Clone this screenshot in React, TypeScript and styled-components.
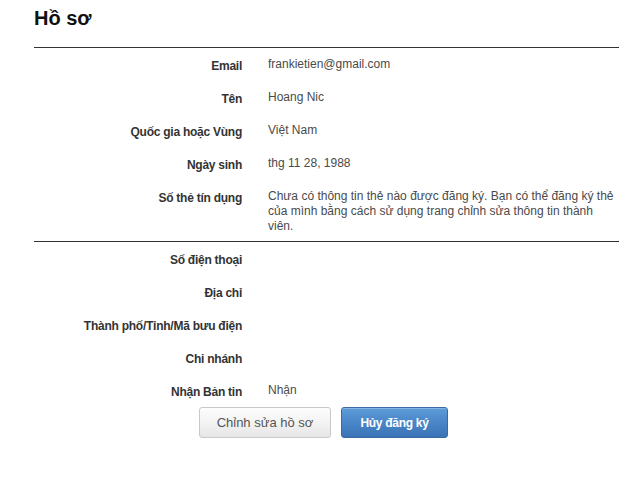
import React from "react";
import styled, { createGlobalStyle } from "styled-components";

const GlobalStyle = createGlobalStyle`
  html, body {
    margin: 0;
    padding: 0;
    background: #ffffff;
  }
  body {
    font-family: "Liberation Sans", Arial, sans-serif;
    color: #333;
  }
`;

interface Field {
  label: string;
  value?: string;
}

const accountFields: Field[] = [
  { label: "Email", value: "frankietien@gmail.com" },
  { label: "Tên", value: "Hoang Nic" },
  { label: "Quốc gia hoặc Vùng", value: "Việt Nam" },
  { label: "Ngày sinh", value: "thg 11 28, 1988" },
  {
    label: "Số thẻ tín dụng",
    value:
      "Chưa có thông tin thẻ nào được đăng ký. Bạn có thể đăng ký thẻ của mình bằng cách sử dụng trang chỉnh sửa thông tin thành viên.",
  },
];

const contactFields: Field[] = [
  { label: "Số điện thoại" },
  { label: "Địa chỉ" },
  { label: "Thành phố/Tỉnh/Mã bưu điện" },
  { label: "Chi nhánh" },
  { label: "Nhận Bản tin", value: "Nhận" },
];

const FieldList = ({ fields, divided }: { fields: Field[]; divided?: boolean }) => (
  <Section divided={divided}>
    {fields.map((f) => (
      <Row key={f.label}>
        <Label>{f.label}</Label>
        <Value>{f.value}</Value>
      </Row>
    ))}
  </Section>
);

const App = () => {
  return (
    <>
      <GlobalStyle />
      <Page>
        <Header>
          <Title>Hồ sơ</Title>
        </Header>
        <FieldList fields={accountFields} divided />
        <FieldList fields={contactFields} />
        <Actions>
          <Button>Chỉnh sửa hồ sơ</Button>
          <Button primary>Hủy đăng ký</Button>
        </Actions>
      </Page>
    </>
  );
};

// Styled Components
const Page = styled.div`
  width: 585px;
  padding: 6px 0 0 34px;
`;

const Header = styled.div`
  padding-bottom: 17px;
  border-bottom: 1px solid #333;
`;

const Title = styled.h1`
  margin: 0;
  font-size: 20px;
  line-height: 24px;
  font-weight: bold;
  color: #111;
`;

const Section = styled.div<{ divided?: boolean }>`
  border-bottom: ${({ divided }) => (divided ? "1px solid #333" : "none")};
`;

const Row = styled.div`
  display: grid;
  grid-template-columns: 208px 1fr;
  column-gap: 26px;
  align-items: start;
  padding: 9px 0 7px;
  font-size: 12px;
  line-height: 15px;
`;

const Label = styled.div`
  padding-top: 2px;
  text-align: right;
  font-weight: bold;
  letter-spacing: -0.25px;
  color: #333;
  min-height: 15px;
`;

const Value = styled.div`
  color: #4a4a4a;
  min-height: 15px;
`;

const Actions = styled.div`
  display: flex;
  gap: 10px;
  padding-left: 165px;
`;

const Button = styled.button<{ primary?: boolean }>`
  height: 31px;
  padding: 0;
  border-radius: 3px;
  font-family: "Liberation Sans", Arial, sans-serif;
  cursor: pointer;
  ${({ primary }) =>
    primary
      ? `
    width: 107px;
    font-size: 12px;
    font-weight: bold;
    letter-spacing: -0.3px;
    color: #fff;
    border: 1px solid #3a6aa3;
    background: linear-gradient(to bottom, #5d9bd8 0%, #4a86c8 50%, #3a73b6 100%);
    box-shadow: inset 0 1px 0 rgba(255,255,255,0.25);
  `
      : `
    width: 132px;
    font-size: 13px;
    color: #555;
    border: 1px solid #c8c8c8;
    background: linear-gradient(to bottom, #fdfdfd 0%, #f3f3f3 50%, #e6e6e6 100%);
  `}
`;

export default App;
